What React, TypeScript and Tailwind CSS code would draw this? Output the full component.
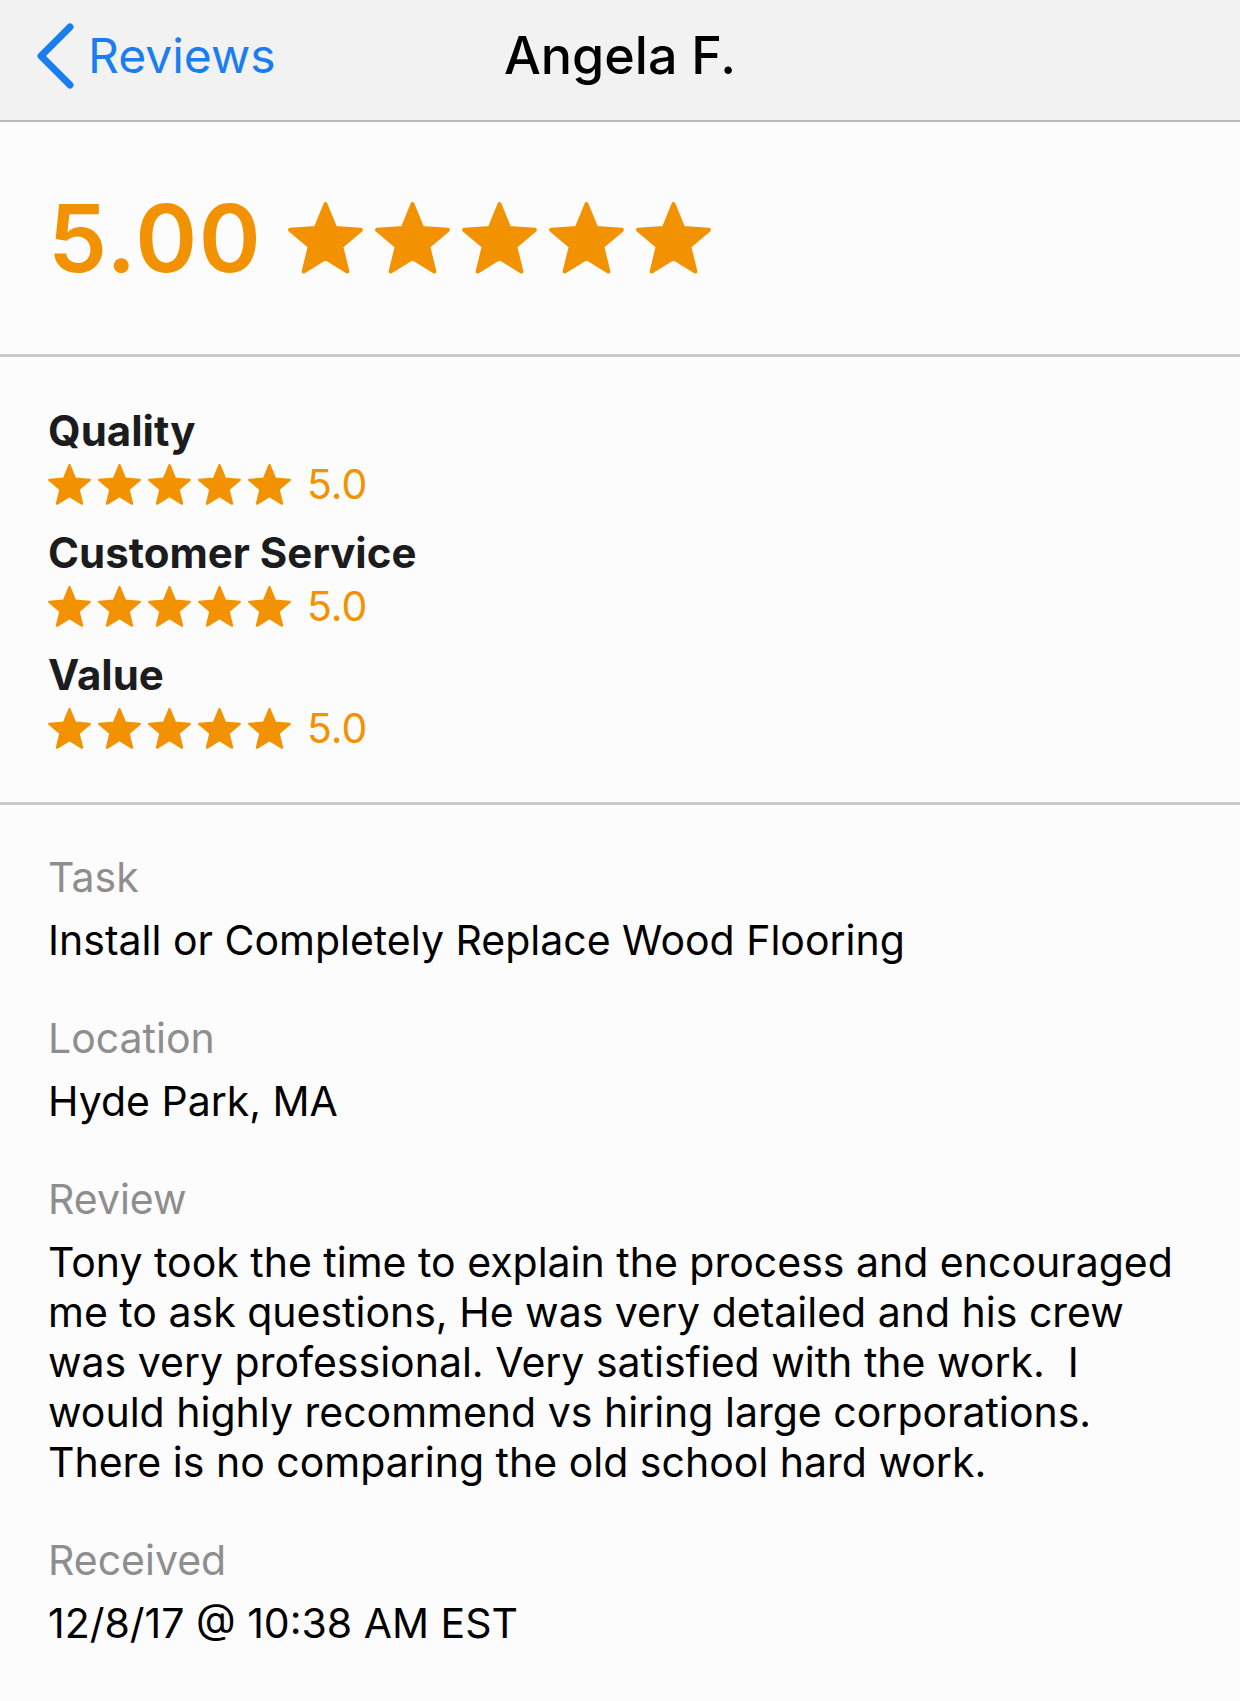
const ORANGE = '#f39200'

function Star({ className }: { className: string }) {
  return (
    <svg viewBox="0.9 1 22.2 21.2" className={className} aria-hidden>
      <polygon
        points="12,1.6 14.88,8.64 22.46,9.2 16.66,14.11 18.47,21.5 12,17.5 5.53,21.5 7.34,14.11 1.54,9.2 9.12,8.64"
        fill={ORANGE}
        stroke={ORANGE}
        strokeWidth="1.2"
        strokeLinejoin="round"
      />
    </svg>
  )
}

function Rating({ label }: { label: string }) {
  return (
    <div>
      <div className="text-[42px] leading-[50px] font-bold text-[#1c1c1e]">{label}</div>
      <div className="flex items-center h-[56px]">
        <div className="flex gap-[7px]">
          {[0, 1, 2, 3, 4].map((i) => (
            <Star key={i} className="w-[43px] h-[41px]" />
          ))}
        </div>
        <span className="ml-[16px] text-[41px] leading-none text-[#f39200]">5.0</span>
      </div>
    </div>
  )
}

function Field({ label, children }: { label: string; children: React.ReactNode }) {
  return (
    <div>
      <div className="text-[41px] leading-[50px] text-[#8e8e8e]">{label}</div>
      <div className="mt-[13px] text-[41px] leading-[50px] text-black">{children}</div>
    </div>
  )
}

export default function App() {
  return (
    <div className="min-h-screen bg-[#fcfcfc] font-['Inter','Noto_Sans',sans-serif]">
      {/* Nav bar */}
      <div className="h-[122px] bg-[#f2f2f2] border-b-2 border-[#b8b8b8]">
        <div className="grid grid-cols-[1fr_auto_1fr] items-center h-[112px] px-[34px]">
          <div className="flex items-center text-[#1a7ef0]">
            <svg width="44" height="66" viewBox="0 0 44 66" fill="none" aria-hidden>
              <path
                d="M36 4 L7 33 L36 62"
                stroke="currentColor"
                strokeWidth="7"
                strokeLinecap="round"
                strokeLinejoin="round"
              />
            </svg>
            <span className="ml-[10px] text-[48px] leading-none">Reviews</span>
          </div>
          <div className="text-[52px] leading-none font-medium text-black">Angela F.</div>
          <div />
        </div>
      </div>

      {/* Overall score */}
      <div className="h-[235px] flex items-center px-[48px] gap-[26px] border-b-[3px] border-[#cbcbcb]">
        <span className="text-[94px] leading-none font-semibold tracking-[1.5px] text-[#f39200]">5.00</span>
        <div className="flex gap-[12px]">
          {[0, 1, 2, 3, 4].map((i) => (
            <Star key={i} className="w-[75px] h-[72px]" />
          ))}
        </div>
      </div>

      {/* Category ratings */}
      <div className="px-[48px] pt-[49px] pb-[46px] flex flex-col gap-[16px] border-b-[3px] border-[#cbcbcb]">
        <Rating label="Quality" />
        <Rating label="Customer Service" />
        <Rating label="Value" />
      </div>

      {/* Details */}
      <div className="px-[48px] pt-[47px] pb-[60px] flex flex-col gap-[48px]">
        <Field label="Task">Install or Completely Replace Wood Flooring</Field>
        <Field label="Location">Hyde Park, MA</Field>
        <Field label="Review">
          Tony took the time to explain the process and encouraged
          <br />
          me to ask questions, He was very detailed and his crew
          <br />
          was very professional. Very satisfied with the work.&nbsp; I
          <br />
          would highly recommend vs hiring large corporations.
          <br />
          There is no comparing the old school hard work.
        </Field>
        <Field label="Received">12/8/17 @ 10:38 AM EST</Field>
      </div>
    </div>
  )
}
